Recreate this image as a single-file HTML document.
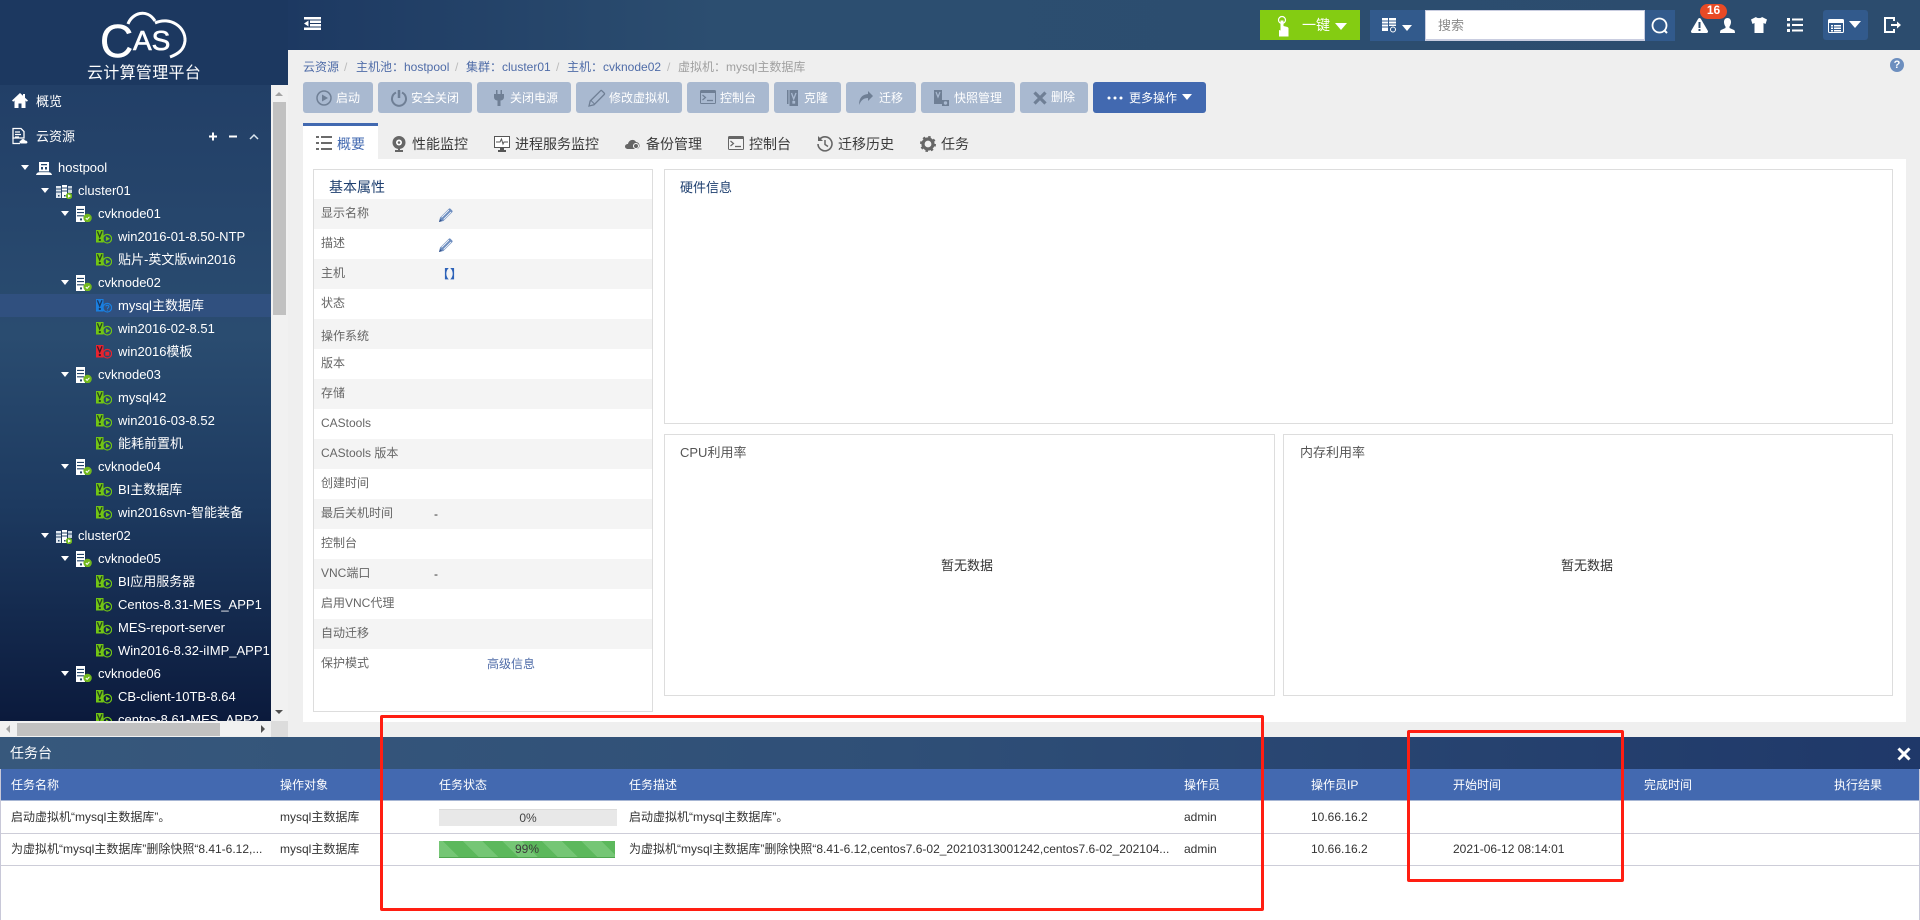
<!DOCTYPE html>
<html lang="zh-CN">
<head>
<meta charset="utf-8">
<title>云计算管理平台</title>
<style>
html,body{margin:0;padding:0;width:1920px;height:920px;overflow:hidden;background:#efefef;}
*{box-sizing:border-box;}
body{position:relative;font-family:"Liberation Sans","Noto Sans CJK SC",sans-serif;font-size:12px;color:#333;}
.a,.a0{position:absolute;white-space:nowrap;}
svg{position:absolute;display:block;overflow:visible;}
#hdr{position:absolute;left:0;top:0;width:1920px;height:50px;background:linear-gradient(90deg,#1b3660 0,#1d3962 290px,#2c4e70 720px,#2c4c6e 1920px);}
#logo{position:absolute;left:0;top:0;width:288px;height:85px;background:#1c3860;}
#side{position:absolute;left:0;top:85px;width:271px;height:636px;overflow:hidden;background:linear-gradient(180deg,#223f67 0,#2a4c70 250px,#1d3a60 420px,#0b1a3c 636px);}
.r{position:absolute;left:0;width:271px;height:23px;line-height:23px;color:#fff;font-size:13px;white-space:nowrap;}
.r span{position:absolute;top:0;}
.r i{position:absolute;top:9px;width:0;height:0;border-left:4px solid transparent;border-right:4px solid transparent;border-top:5px solid #fff;}
.l0 span{left:58px}.l0 i{left:21px}
.l1 span{left:78px}.l1 i{left:41px}
.l2 span{left:98px}.l2 i{left:61px}
.l3 span{left:118px}
.r svg.p{left:36px;top:6px}
.r svg.c{left:56px;top:6px}
.r svg.h{left:76px;top:4px}
.r svg.v{left:96px;top:5px}
.bc{top:59px;line-height:16px;color:#4f6ca8;font-size:12px;}
.bs{top:59px;line-height:16px;color:#bbb;font-size:12px;}
.btn{position:absolute;top:82px;height:31px;border-radius:3px;background:#a9b9d0;}
.bt{position:absolute;top:83px;line-height:31px;color:#fff;font-size:12px;white-space:nowrap;}
.tab{position:absolute;top:134px;line-height:20px;font-size:14px;color:#3a3a3a;white-space:nowrap;}
.panel{position:absolute;background:#fff;border:1px solid #ddd;}
.title{position:absolute;font-size:13px;line-height:18px;color:#1e3f6f;white-space:nowrap;}
.pr{position:absolute;left:314px;width:338px;height:30px;}
.lb{position:absolute;left:321px;font-size:12px;line-height:16px;color:#666;white-space:nowrap;}
.th{position:absolute;top:769px;line-height:32px;color:#fff;font-size:12px;white-space:nowrap;}
.td{position:absolute;line-height:32px;color:#333;font-size:12px;white-space:nowrap;}
.red{position:absolute;border:3px solid #ff1e12;border-radius:2px;}
</style>
</head>
<body>
<svg width="0" height="0" style="position:absolute">
<defs>
<symbol id="vmg" viewBox="0 0 16 14"><rect x="0" y="0" width="7.500" height="12.500" fill="#72c515"/><path d="M1.400 1.200L3.700 7 6 1.200" fill="none" stroke="#26431f" stroke-width="1.300"/><rect x="2.800" y="9" width="2" height="2" fill="#26431f"/><circle cx="11.300" cy="8.700" r="4.300" fill="none" stroke="#72c515" stroke-width="1.200"/><path d="M9.900 6.300L14 8.700 9.900 11.100z" fill="#72c515"/></symbol>
<symbol id="vmb" viewBox="0 0 16 14"><rect x="0" y="0" width="7.500" height="12.500" fill="#1a7fe0"/><path d="M1.400 1.200L3.700 7 6 1.200" fill="none" stroke="#18355f" stroke-width="1.300"/><rect x="2.800" y="9" width="2" height="2" fill="#18355f"/><circle cx="11.300" cy="8.700" r="4.300" fill="none" stroke="#1a7fe0" stroke-width="1.200"/><path d="M9.800 7.400C10.200 5.700 13 6 12.800 7.800 12.700 8.800 11.400 8.800 11.400 10M11.400 10.600v1" fill="none" stroke="#1a7fe0" stroke-width="1.100"/></symbol>
<symbol id="vmr" viewBox="0 0 16 14"><rect x="0" y="0" width="7.500" height="12.500" fill="#e8242f"/><path d="M1.400 1.200L3.700 7 6 1.200" fill="none" stroke="#3b1a2a" stroke-width="1.300"/><rect x="2.800" y="9" width="2" height="2" fill="#3b1a2a"/><circle cx="11.300" cy="8.700" r="4.300" fill="none" stroke="#e8242f" stroke-width="1.200"/><rect x="9.300" y="6.700" width="4" height="4" fill="#e8242f"/></symbol>
<symbol id="host" viewBox="0 0 16 16"><path d="M0 0h9v16H0z" fill="#fff"/><path d="M1 3.400h7M1 6.600h7M1 9.800h7" stroke="#24456a" stroke-width="1.100"/><rect x="4" y="12.400" width="2" height="2" fill="#24456a"/><circle cx="11.600" cy="12" r="4.200" fill="#72b81c"/><path d="M9.800 12l1.300 1.400 2.300-2.600" fill="none" stroke="#fff" stroke-width="1"/></symbol>
<symbol id="clus" viewBox="0 0 16 14"><path d="M0 1h5v12H0z" fill="#dfe6ee"/><path d="M6 0h5v13H6z" fill="#fff"/><path d="M12 1h4v7h-4z" fill="#c7d2de"/><path d="M0 4h5M0 7h5M6 3h5M6 6h5M12 4h4" stroke="#24456a"/><rect x="2" y="10" width="1.500" height="1.500" fill="#24456a"/><rect x="8" y="10" width="1.500" height="1.500" fill="#24456a"/><circle cx="13" cy="11" r="3.200" fill="#72b81c"/><path d="M12 9.200L15 11l-3 1.800z" fill="#fff"/></symbol>
<symbol id="pool" viewBox="0 0 16 13"><path d="M3 0h10v10H3z" fill="#fff"/><path d="M5 2h6v1.300H5zM5 5h2v2.500H5zM9 5h2v2.500H9z" fill="#24456a"/><path d="M0 13C.5 10.500 3 9.500 8 9.500S15.500 10.500 16 13z" fill="#fff"/><path d="M2.500 9.800h11" stroke="#24456a" stroke-width=".8"/></symbol>
<symbol id="pen" viewBox="0 0 14 14"><path d="M0 14l1-4.400L9.800 .8a1.200 1.200 0 0 1 1.700 0l1.700 1.700a1.200 1.200 0 0 1 0 1.700L4.400 13z" fill="#6f8fc0"/><path d="M2.600 9.400L10 2M4.600 11.400L12 4" stroke="#fff" stroke-width=".8"/><path d="M0 14l1-3 2 2z" fill="#33528a"/></symbol>
</defs>
</svg>

<div id="hdr"></div>
<div id="logo"></div>

<!-- logo -->
<svg style="left:0;top:0" width="288" height="85">
<path d="M128 24C132 13 147 8 155 21" fill="none" stroke="#fff" stroke-width="3"/>
<path d="M155 23C170 16 186 27 185 41C184 50 178 54 170 57" fill="none" stroke="#fff" stroke-width="3"/>
<text x="100" y="57" font-family="Liberation Sans" font-size="46" fill="#fff" stroke="#fff" stroke-width=".5">C</text>
<text x="133" y="50" font-family="Liberation Sans" font-size="28" fill="#fff" stroke="#fff" stroke-width=".6">AS</text>
</svg>
<div class="a" style="left:87px;top:62px;font-size:16px;line-height:24px;color:#fff;letter-spacing:.3px;">云计算管理平台</div>

<!-- sidebar -->
<div id="side">
<div style="position:absolute;left:0;top:209px;width:271px;height:23px;background:#30507f"></div>
<div class="r l0" style="top:71px"><i></i><svg class="p" width="16" height="13"><use href="#pool"/></svg><span>hostpool</span></div>
<div class="r l1" style="top:94px"><i></i><svg class="c" width="16" height="14"><use href="#clus"/></svg><span>cluster01</span></div>
<div class="r l2" style="top:117px"><i></i><svg class="h" width="16" height="16"><use href="#host"/></svg><span>cvknode01</span></div>
<div class="r l3" style="top:140px"><svg class="v" width="16" height="14"><use href="#vmg"/></svg><span>win2016-01-8.50-NTP</span></div>
<div class="r l3" style="top:163px"><svg class="v" width="16" height="14"><use href="#vmg"/></svg><span>贴片-英文版win2016</span></div>
<div class="r l2" style="top:186px"><i></i><svg class="h" width="16" height="16"><use href="#host"/></svg><span>cvknode02</span></div>
<div class="r l3" style="top:209px"><svg class="v" width="16" height="14"><use href="#vmb"/></svg><span>mysql主数据库</span></div>
<div class="r l3" style="top:232px"><svg class="v" width="16" height="14"><use href="#vmg"/></svg><span>win2016-02-8.51</span></div>
<div class="r l3" style="top:255px"><svg class="v" width="16" height="14"><use href="#vmr"/></svg><span>win2016模板</span></div>
<div class="r l2" style="top:278px"><i></i><svg class="h" width="16" height="16"><use href="#host"/></svg><span>cvknode03</span></div>
<div class="r l3" style="top:301px"><svg class="v" width="16" height="14"><use href="#vmg"/></svg><span>mysql42</span></div>
<div class="r l3" style="top:324px"><svg class="v" width="16" height="14"><use href="#vmg"/></svg><span>win2016-03-8.52</span></div>
<div class="r l3" style="top:347px"><svg class="v" width="16" height="14"><use href="#vmg"/></svg><span>能耗前置机</span></div>
<div class="r l2" style="top:370px"><i></i><svg class="h" width="16" height="16"><use href="#host"/></svg><span>cvknode04</span></div>
<div class="r l3" style="top:393px"><svg class="v" width="16" height="14"><use href="#vmg"/></svg><span>BI主数据库</span></div>
<div class="r l3" style="top:416px"><svg class="v" width="16" height="14"><use href="#vmg"/></svg><span>win2016svn-智能装备</span></div>
<div class="r l1" style="top:439px"><i></i><svg class="c" width="16" height="14"><use href="#clus"/></svg><span>cluster02</span></div>
<div class="r l2" style="top:462px"><i></i><svg class="h" width="16" height="16"><use href="#host"/></svg><span>cvknode05</span></div>
<div class="r l3" style="top:485px"><svg class="v" width="16" height="14"><use href="#vmg"/></svg><span>BI应用服务器</span></div>
<div class="r l3" style="top:508px"><svg class="v" width="16" height="14"><use href="#vmg"/></svg><span>Centos-8.31-MES_APP1</span></div>
<div class="r l3" style="top:531px"><svg class="v" width="16" height="14"><use href="#vmg"/></svg><span>MES-report-server</span></div>
<div class="r l3" style="top:554px"><svg class="v" width="16" height="14"><use href="#vmg"/></svg><span>Win2016-8.32-iIMP_APP1</span></div>
<div class="r l2" style="top:577px"><i></i><svg class="h" width="16" height="16"><use href="#host"/></svg><span>cvknode06</span></div>
<div class="r l3" style="top:600px"><svg class="v" width="16" height="14"><use href="#vmg"/></svg><span>CB-client-10TB-8.64</span></div>
<div class="r l3" style="top:623px"><svg class="v" width="16" height="14"><use href="#vmg"/></svg><span>centos-8.61-MES_APP2</span></div>
</div>

<!-- sidebar nav -->
<svg style="left:12px;top:93px" width="16" height="15"><path d="M8 0L0 7.500l1.200 1.200L2.500 7.500V15h4v-4.500h3V15h4V7.500l1.300 1.200L16 7.500 13 4.700V1h-2v1.800z" fill="#fff"/></svg>
<div class="a" style="left:36px;top:92px;font-size:13px;line-height:20px;color:#fff;">概览</div>
<svg style="left:12px;top:128px" width="17" height="17"><path d="M1 .5h8l3 3V10H1z" fill="none" stroke="#fff" stroke-width="1.300"/><path d="M3 4h5M3 6.500h6M3 9h4M1 10v5.500h7" stroke="#fff" stroke-width="1.200" fill="none"/><path d="M9 15.500c-2 0-2-3 0-3 .5-2 3.500-2 4 0 2.500-.3 3.500 3 1 3z" fill="#fff"/></svg>
<div class="a" style="left:36px;top:127px;font-size:13px;line-height:20px;color:#fff;">云资源</div>
<svg style="left:208px;top:131px" width="52" height="12"><path d="M1 5.500h8M5 1.500v8M21 5.500h8" stroke="#fff" stroke-width="2"/><path d="M42 8l4-4 4 4" fill="none" stroke="#dbe6f0" stroke-width="1.500"/></svg>

<!-- sidebar scrollbars -->
<div style="position:absolute;left:271px;top:85px;width:17px;height:636px;background:#f1f1f1"></div>
<div style="position:absolute;left:273px;top:102px;width:13px;height:213px;background:#c1c1c1"></div>
<div style="position:absolute;left:275px;top:92px;width:0;height:0;border-left:4px solid transparent;border-right:4px solid transparent;border-bottom:4px solid #a3a3a3"></div>
<div style="position:absolute;left:275px;top:710px;width:0;height:0;border-left:4px solid transparent;border-right:4px solid transparent;border-top:4px solid #505050"></div>
<div style="position:absolute;left:0;top:721px;width:271px;height:16px;background:#f1f1f1"></div>
<div style="position:absolute;left:17px;top:723px;width:203px;height:13px;background:#c1c1c1"></div>
<div style="position:absolute;left:6px;top:725px;width:0;height:0;border-top:4px solid transparent;border-bottom:4px solid transparent;border-right:4px solid #a3a3a3"></div>
<div style="position:absolute;left:261px;top:725px;width:0;height:0;border-top:4px solid transparent;border-bottom:4px solid transparent;border-left:4px solid #505050"></div>
<div style="position:absolute;left:271px;top:721px;width:17px;height:16px;background:#dcdcdc"></div>

<!-- header toggle -->
<svg style="left:304px;top:17px" width="17" height="13"><path d="M0 0h17v2.500H0zM6 3.500h11v2.500H6zM6 7h11v2.500H6zM0 10.500h17V13H0zM4.500 3.500v6L0 6.500z" fill="#fff"/></svg>

<!-- header right -->
<div style="position:absolute;left:1260px;top:10px;width:100px;height:30px;background:#84cc12"></div>
<svg style="left:1276px;top:14px" width="14" height="23"><circle cx="6" cy="6" r="3.500" fill="none" stroke="#fff" stroke-width="1.200"/><path d="M4.500 6.500h3v5.500l4 1 1 1v8.500H3V16l1.500 .5z" fill="#fff"/></svg>
<div class="a" style="left:1302px;top:15px;font-size:14px;line-height:20px;color:#fff;">一键</div>
<div style="position:absolute;left:1335px;top:23px;width:0;height:0;border-left:6px solid transparent;border-right:6px solid transparent;border-top:7px solid #fff"></div>
<div style="position:absolute;left:1370px;top:10px;width:55px;height:31px;background:#325a8c"></div>
<svg style="left:1382px;top:18px" width="15" height="15"><path d="M0 0h6v13H0zM7 0h7v8H7z" fill="#fff"/><path d="M0 3h6M0 6h6M0 9h6M7 3h7M7 6h7" stroke="#325a8c"/><circle cx="11" cy="11.500" r="2.500" fill="none" stroke="#fff"/></svg>
<div style="position:absolute;left:1402px;top:25px;width:0;height:0;border-left:5.500px solid transparent;border-right:5.500px solid transparent;border-top:6px solid #fff"></div>
<div style="position:absolute;left:1425px;top:10px;width:220px;height:31px;background:#fff;border:1px solid #c9cde0;border-bottom-width:2px"></div>
<div class="a" style="left:1438px;top:16px;font-size:13px;line-height:20px;color:#8a8a8a;">搜索</div>
<div style="position:absolute;left:1645px;top:10px;width:30px;height:31px;background:#325a8c"></div>
<svg style="left:1651px;top:17px" width="18" height="18"><circle cx="8.500" cy="8.500" r="7" fill="none" stroke="#fff" stroke-width="1.800"/><path d="M13 13l3 3" stroke="#fff" stroke-width="2"/></svg>

<svg style="left:1691px;top:18px" width="17" height="15"><path d="M8.500 0a1.500 1.500 0 0 1 1.300 .8L16.800 12.700A1.500 1.500 0 0 1 15.500 15H1.500A1.500 1.500 0 0 1 .2 12.700L7.200 .8A1.500 1.500 0 0 1 8.500 0z" fill="#fff"/><path d="M7.500 4h2v6h-2zM7.500 11h2v2h-2z" fill="#2c4c6e"/></svg>
<svg style="left:1720px;top:18px" width="15" height="15"><path d="M7.500 0C10 0 11 2 11 4S10 8 9.500 8.500V10L14 12c1 .5 1 3 1 3H0s0-2.500 1-3l4.500-2V8.500C5 8 4 6 4 4s1-4 3.500-4z" fill="#fff"/></svg>
<div style="position:absolute;left:1700px;top:4px;width:27px;height:15px;border-radius:8px;background:#e84a25;color:#fff;font-size:12px;font-weight:bold;line-height:13px;text-align:center;">16</div>
<svg style="left:1751px;top:17px" width="16" height="16"><path d="M5 0L0 2.500 1.500 7 3.500 6V16h9V6l2 1L16 2.500 11 0C10 1.500 6 1.500 5 0z" fill="#fff"/></svg>
<svg style="left:1787px;top:18px" width="16" height="14"><path d="M0 0h3v3H0zM0 5.500h3v3H0zM0 11h3v3H0zM5 .5h11v2H5zM5 6h11v2H5zM5 11.500h11v2H5z" fill="#fff"/></svg>
<div style="position:absolute;left:1823px;top:10px;width:45px;height:30px;border-radius:3px;background:#325a8c"></div>
<svg style="left:1828px;top:19px" width="16" height="14"><rect x=".5" y=".5" width="15" height="13" rx="1" fill="none" stroke="#fff"/><path d="M1 1h14v3H1zM3 6h2v1.500H3zM6 6h7v1.500H6zM3 8.500h2V10H3zM6 8.500h7V10H6zM3 11h2v1.500H3zM6 11h7v1.500H6z" fill="#fff"/></svg>
<div style="position:absolute;left:1849px;top:21px;width:0;height:0;border-left:6px solid transparent;border-right:6px solid transparent;border-top:7px solid #fff"></div>
<svg style="left:1884px;top:17px" width="17" height="16"><path d="M10 4V1H1v14h9v-3" fill="none" stroke="#fff" stroke-width="2"/><path d="M7 7h6V4.500L17 8l-4 3.500V9H7z" fill="#fff"/></svg>

<!-- breadcrumb -->
<div class="a bc" style="left:303px">云资源</div><div class="a bs" style="left:344px">/</div>
<div class="a bc" style="left:356px">主机池：hostpool</div><div class="a bs" style="left:455px">/</div>
<div class="a bc" style="left:466px">集群：cluster01</div><div class="a bs" style="left:556px">/</div>
<div class="a bc" style="left:567px">主机：cvknode02</div><div class="a bs" style="left:667px">/</div>
<div class="a bc" style="left:678px;color:#a0a0a0">虚拟机：mysql主数据库</div>
<div style="position:absolute;left:1890px;top:58px;width:14px;height:14px;border-radius:50%;background:#6d8fbf;color:#fff;font-size:11px;font-weight:bold;line-height:14px;text-align:center;">?</div>

<!-- toolbar -->
<div class="btn" style="left:303px;width:70px"></div>
<div class="btn" style="left:378px;width:94px"></div>
<div class="btn" style="left:477px;width:94px"></div>
<div class="btn" style="left:576px;width:106px"></div>
<div class="btn" style="left:687px;width:82px"></div>
<div class="btn" style="left:774px;width:67px"></div>
<div class="btn" style="left:846px;width:70px"></div>
<div class="btn" style="left:921px;width:94px"></div>
<div class="btn" style="left:1020px;width:68px"></div>
<div class="btn" style="left:1093px;width:113px;background:#4269b0"></div>
<svg style="left:316px;top:90px" width="16" height="16"><circle cx="8" cy="8" r="7" fill="none" stroke="#6f7f95" stroke-width="1.500"/><path d="M6 4.500L12 8 6 11.500z" fill="#6f7f95"/></svg>
<div class="bt" style="left:336px">启动</div>
<svg style="left:391px;top:90px" width="16" height="16"><path d="M5 2.500A7 7 0 1 0 11 2.500" fill="none" stroke="#6f7f95" stroke-width="2"/><path d="M8 0v8" stroke="#6f7f95" stroke-width="2.500"/></svg>
<div class="bt" style="left:411px">安全关闭</div>
<svg style="left:494px;top:90px" width="10" height="16"><path d="M2 0h1.500v4H2zM6.500 0H8v4H6.500zM0 4h10v3C10 9.500 8 10.500 6.500 10.500V16h-3v-5.500C2 10.500 0 9.500 0 7z" fill="#6f7f95"/></svg>
<div class="bt" style="left:510px">关闭电源</div>
<svg style="left:589px;top:90px" width="16" height="16"><path d="M0 16l1.200-5L11.500 .8a1 1 0 0 1 1.400 0l2.300 2.300a1 1 0 0 1 0 1.400L5 14.800z" fill="none" stroke="#6f7f95" stroke-width="1.300"/><path d="M2 10.500l3.500 3.500" stroke="#6f7f95"/></svg>
<div class="bt" style="left:609px">修改虚拟机</div>
<svg style="left:700px;top:90px" width="16" height="14"><rect width="16" height="14" rx="1.500" fill="#6f7f95"/><rect x="1" y="3" width="14" height="10" fill="#a9b9d0"/><path d="M2.500 5l3 2.500-3 2.500" fill="none" stroke="#6f7f95" stroke-width="1.200"/><path d="M7 10.500h6" stroke="#6f7f95" stroke-width="1.300"/></svg>
<div class="bt" style="left:720px">控制台</div>
<svg style="left:787px;top:90px" width="11" height="16"><path d="M0 0h1.500v14H0z" fill="#6f7f95"/><path d="M2.500 0H11v16H2.500z" fill="#6f7f95"/><path d="M4.500 3l2.200 6L9 3M6 11.500h1.500V13H6z" fill="none" stroke="#a9b9d0" stroke-width="1.300"/></svg>
<div class="bt" style="left:804px">克隆</div>
<svg style="left:859px;top:91px" width="14" height="14"><path d="M9 0l5 5-5 5V7C5 7 2.500 8.500 0 14 0 7 3 3.500 9 3z" fill="#6f7f95"/></svg>
<div class="bt" style="left:879px">迁移</div>
<svg style="left:934px;top:92px" width="15" height="17"><path d="M0 0h8v14H0z" fill="#6f7f95" transform="translate(0 -2)"/><path d="M2 0l2 5 2-5" fill="none" stroke="#a9b9d0" stroke-width="1.200"/><rect x="8" y="8" width="7" height="6" fill="#6f7f95"/><circle cx="11.500" cy="11" r="1.700" fill="#a9b9d0"/></svg>
<div class="bt" style="left:954px">快照管理</div>
<svg style="left:1033px;top:91px" width="14" height="14"><path d="M1.500 1.500l11 11M12.500 1.500l-11 11" stroke="#6f7f95" stroke-width="3.200"/></svg>
<div class="bt" style="left:1051px;top:82px">删除</div>
<svg style="left:1107px;top:96px" width="16" height="4"><circle cx="2" cy="2" r="1.500" fill="#fff"/><circle cx="8" cy="2" r="1.500" fill="#fff"/><circle cx="14" cy="2" r="1.500" fill="#fff"/></svg>
<div class="bt" style="left:1129px">更多操作</div>
<div style="position:absolute;left:1182px;top:94px;width:0;height:0;border-left:5.500px solid transparent;border-right:5.500px solid transparent;border-top:6px solid #fff"></div>

<!-- tabs -->
<div style="position:absolute;left:303px;top:123px;width:75px;height:36px;background:#fff;border-top:3px solid #4269b0"></div>
<svg style="left:316px;top:136px" width="16" height="14"><path d="M0 0h3v2H0zM0 6h3v2H0zM0 12h3v2H0zM5 0h11v2H5zM5 6h11v2H5zM5 12h11v2H5z" fill="#6b6b6b"/></svg>
<div class="tab" style="left:337px;color:#4269b0">概要</div>
<svg style="left:392px;top:136px" width="14" height="16"><circle cx="7" cy="6.500" r="6.500" fill="#666"/><circle cx="7" cy="6.500" r="3" fill="#fff"/><circle cx="7" cy="6.500" r="1.300" fill="#666"/><path d="M3 14h8v2H3z" fill="#666"/><path d="M6 12h2v2H6z" fill="#666"/></svg>
<div class="tab" style="left:412px">性能监控</div>
<svg style="left:494px;top:136px" width="16" height="16"><rect x="0" y="0" width="16" height="12" fill="#555"/><rect x="1" y="1" width="14" height="10" fill="#fff"/><path d="M2 6h4l1.500-3 1.500 5 1-2h4" fill="none" stroke="#555"/><path d="M6 12h4v2h2v2H4v-2h2z" fill="#555"/></svg>
<div class="tab" style="left:515px">进程服务监控</div>
<svg style="left:625px;top:137px" width="16" height="13"><path d="M3 12c-4 0-4-5 0-5 .5-4 6-6 8-2 4 0 5 6 1 7z" fill="#666"/><circle cx="11" cy="9" r="2.500" fill="none" stroke="#fff"/></svg>
<div class="tab" style="left:646px">备份管理</div>
<svg style="left:728px;top:136px" width="16" height="14"><rect width="16" height="14" rx="1.500" fill="#666"/><rect x="1" y="3" width="14" height="10" fill="#f2f2f2"/><path d="M2.500 5l3 2.500-3 2.500" fill="none" stroke="#666" stroke-width="1.200"/><path d="M7 10.500h6" stroke="#666" stroke-width="1.300"/></svg>
<div class="tab" style="left:749px">控制台</div>
<svg style="left:817px;top:136px" width="16" height="16"><path d="M2.500 3.500A7 7 0 1 1 1 8" fill="none" stroke="#666" stroke-width="1.600"/><path d="M1 0v5h5z" fill="#666"/><path d="M8 4v4.500l3 2" fill="none" stroke="#666" stroke-width="1.500"/></svg>
<div class="tab" style="left:838px">迁移历史</div>
<svg style="left:920px;top:136px" width="16" height="16"><circle cx="8" cy="8" r="5" fill="none" stroke="#666" stroke-width="3.200"/><circle cx="8" cy="8" r="7" fill="none" stroke="#666" stroke-width="2" stroke-dasharray="2.500 3"/></svg>
<div class="tab" style="left:941px">任务</div>

<!-- content -->
<div style="position:absolute;left:303px;top:159px;width:1603px;height:563px;background:#fff"></div>
<div class="panel" style="left:313px;top:169px;width:340px;height:543px"></div>
<div class="a" style="left:329px;top:178px;font-size:14px;line-height:18px;color:#1e3f6f;">基本属性</div>
<div class="pr" style="top:199px;background:#f4f4f4"></div>
<div class="pr" style="top:259px;background:#f4f4f4"></div>
<div class="pr" style="top:319px;background:#f4f4f4"></div>
<div class="pr" style="top:379px;background:#f4f4f4"></div>
<div class="pr" style="top:439px;background:#f4f4f4"></div>
<div class="pr" style="top:499px;background:#f4f4f4"></div>
<div class="pr" style="top:559px;background:#f4f4f4"></div>
<div class="pr" style="top:619px;background:#f4f4f4"></div>
<div class="lb" style="top:205px">显示名称</div>
<div class="lb" style="top:235px">描述</div>
<div class="lb" style="top:265px">主机</div>
<div class="lb" style="top:295px">状态</div>
<div class="lb" style="top:328px">操作系统</div>
<div class="lb" style="top:355px">版本</div>
<div class="lb" style="top:385px">存储</div>
<div class="lb" style="top:415px">CAStools</div>
<div class="lb" style="top:445px">CAStools 版本</div>
<div class="lb" style="top:475px">创建时间</div>
<div class="lb" style="top:505px">最后关机时间</div>
<div class="lb" style="top:535px">控制台</div>
<div class="lb" style="top:565px">VNC端口</div>
<div class="lb" style="top:595px">启用VNC代理</div>
<div class="lb" style="top:625px">自动迁移</div>
<div class="lb" style="top:655px">保护模式</div>
<svg style="left:439px;top:208px" width="14" height="14"><use href="#pen"/></svg>
<svg style="left:439px;top:238px" width="14" height="14"><use href="#pen"/></svg>
<div class="a" style="left:437px;top:266px;letter-spacing:1px;font-size:12px;font-weight:bold;line-height:16px;color:#2d62b8;">【】</div>
<div class="a" style="left:434px;top:506px;font-size:12px;line-height:16px;color:#333;">-</div>
<div class="a" style="left:434px;top:566px;font-size:12px;line-height:16px;color:#333;">-</div>
<div class="a" style="left:487px;top:656px;font-size:12px;line-height:16px;color:#4f6ca8;">高级信息</div>

<div class="panel" style="left:664px;top:169px;width:1229px;height:255px"></div>
<div class="title" style="left:680px;top:179px">硬件信息</div>
<div class="panel" style="left:664px;top:434px;width:611px;height:262px"></div>
<div class="title" style="left:680px;top:444px;color:#555">CPU利用率</div>
<div class="a" style="left:941px;top:557px;font-size:13px;line-height:18px;color:#333;">暂无数据</div>
<div class="panel" style="left:1283px;top:434px;width:610px;height:262px"></div>
<div class="title" style="left:1300px;top:444px;color:#555">内存利用率</div>
<div class="a" style="left:1561px;top:557px;font-size:13px;line-height:18px;color:#333;">暂无数据</div>

<!-- task panel -->
<div style="position:absolute;left:0;top:737px;width:1920px;height:32px;background:linear-gradient(90deg,#37587c 0,#2f4f77 900px,#1f3869 1920px)"></div>
<div class="a" style="left:10px;top:743px;font-size:14px;line-height:20px;color:#fff;">任务台</div>
<svg style="left:1897px;top:747px" width="14" height="14"><path d="M1.500 1.500l11 11M12.500 1.500l-11 11" stroke="#fff" stroke-width="3"/></svg>
<div style="position:absolute;left:0;top:769px;width:1920px;height:151px;background:#fff;border-left:1px solid #c8c8d8;border-right:1px solid #c8c8d8"></div>
<div style="position:absolute;left:1px;top:769px;width:1918px;height:32px;background:#4369b0;border-bottom:1px solid #a7b6d4"></div>
<div style="position:absolute;left:1px;top:833px;width:1918px;height:1px;background:#cdcdd8"></div>
<div style="position:absolute;left:1px;top:865px;width:1918px;height:1px;background:#cdcdd8"></div>
<div class="th" style="left:11px">任务名称</div>
<div class="th" style="left:280px">操作对象</div>
<div class="th" style="left:439px">任务状态</div>
<div class="th" style="left:629px">任务描述</div>
<div class="th" style="left:1184px">操作员</div>
<div class="th" style="left:1311px">操作员IP</div>
<div class="th" style="left:1453px">开始时间</div>
<div class="th" style="left:1644px">完成时间</div>
<div class="th" style="left:1834px">执行结果</div>

<div class="td" style="left:11px;top:801px">启动虚拟机“mysql主数据库”。</div>
<div class="td" style="left:280px;top:801px">mysql主数据库</div>
<div style="position:absolute;left:439px;top:809px;width:178px;height:17px;background:#e8e8e8;border-top:1px solid #dcdcdc;text-align:center;line-height:17px;font-size:12px;color:#444;">0%</div>
<div class="td" style="left:629px;top:801px">启动虚拟机“mysql主数据库”。</div>
<div class="td" style="left:1184px;top:801px">admin</div>
<div class="td" style="left:1311px;top:801px">10.66.16.2</div>

<div class="td" style="left:11px;top:833px">为虚拟机“mysql主数据库”删除快照“8.41-6.12,...</div>
<div class="td" style="left:280px;top:833px">mysql主数据库</div>
<div style="position:absolute;left:439px;top:841px;width:176px;height:17px;background:repeating-linear-gradient(45deg,#75c675 0,#75c675 14px,#5cb85c 14px,#5cb85c 28px);border-bottom:1px solid #4ea64e;text-align:center;line-height:17px;font-size:12px;color:#3c3c3c;">99%</div>
<div class="td" style="left:629px;top:833px">为虚拟机“mysql主数据库”删除快照“8.41-6.12,centos7.6-02_20210313001242,centos7.6-02_202104...</div>
<div class="td" style="left:1184px;top:833px">admin</div>
<div class="td" style="left:1311px;top:833px">10.66.16.2</div>
<div class="td" style="left:1453px;top:833px">2021-06-12 08:14:01</div>

<!-- red annotation boxes -->
<div class="red" style="left:380px;top:715px;width:884px;height:196px"></div>
<div class="red" style="left:1407px;top:730px;width:217px;height:152px"></div>
</body>
</html>
